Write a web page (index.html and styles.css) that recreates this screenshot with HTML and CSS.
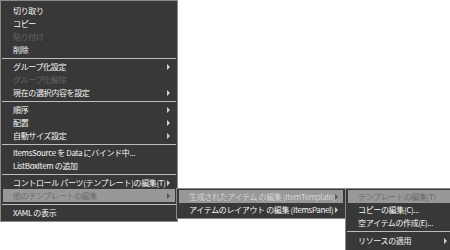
FILE: index.html
```html
<!DOCTYPE html>
<html lang="ja">
<head>
  <meta charset="UTF-8">
  <title>コンテキストメニュー</title>
  <link rel="stylesheet" href="styles.css">
</head>
<body>
  <div class="menu main-menu">
    <div class="item">切り取り</div>
    <div class="item">コピー</div>
    <div class="item disabled">貼り付け</div>
    <div class="item">削除</div>
    <div class="sep"></div>
    <div class="item sub">グループ化設定</div>
    <div class="item disabled">グループ化解除</div>
    <div class="item sub">現在の選択内容を設定</div>
    <div class="sep"></div>
    <div class="item sub">順序</div>
    <div class="item sub">配置</div>
    <div class="item sub">自動サイズ設定</div>
    <div class="sep"></div>
    <div class="item">ItemsSource を Data にバインド中...</div>
    <div class="item">ListBoxItem の追加</div>
    <div class="sep"></div>
    <div class="item sub">コントロール パーツ(テンプレート)の編集(T)</div>
    <div class="item sub active">他のテンプレートの編集</div>
    <div class="sep"></div>
    <div class="item">XAML の表示</div>
  </div>

  <div class="menu submenu-1">
    <div class="item sub active">生成されたアイテム の編集 (ItemTemplate)</div>
    <div class="item sub">アイテムのレイアウト の編集 (ItemsPanel)</div>
  </div>

  <div class="menu submenu-2">
    <div class="item active">テンプレートの編集(T)</div>
    <div class="item">コピーの編集(C)...</div>
    <div class="item">空アイテムの作成(E)...</div>
    <div class="sep"></div>
    <div class="item sub">リソースの適用</div>
  </div>
</body>
</html>
```

FILE: styles.css
```css
body {
  margin: 0;
  background: #fff;
  font-family: "Noto Sans CJK JP", "DejaVu Sans", sans-serif;
  font-size: 8px;
  letter-spacing: -0.35px;
  width: 450px;
  height: 250px;
  overflow: hidden;
  position: relative;
}
.menu {
  background: #383838;
  border: 1px solid #8a8a8a;
  padding: 3px 2px 2px;
  box-sizing: border-box;
  color: #f6f6f6;
}
.main-menu {
  width: 178px;
}
.item {
  height: 13px;
  line-height: 13px;
  padding-left: 10px;
  position: relative;
  white-space: nowrap;
}
.item.disabled {
  color: #666;
}
.item.active {
  background: #989898;
  color: #6c6c6c;
}
.item.sub::after {
  content: "";
  position: absolute;
  right: 5px;
  top: 4px;
  border-left: 3px solid #d0d0d0;
  border-top: 3px solid transparent;
  border-bottom: 3px solid transparent;
}
.item.active.sub::after {
  border-left-color: #555;
}
.sep {
  height: 1px;
  background: #bcbcbc;
  margin: 2px -1px 1px;
}
.submenu-1 {
  position: absolute;
  left: 176px;
  top: 188px;
  width: 170px;
  padding-top: 1px;
}
.submenu-1 .item.active {
  color: #d4d4d4;
}
.submenu-2 {
  position: absolute;
  left: 345px;
  top: 188px;
  width: 110px;
  height: 66px;
  padding-top: 1px;
}
.submenu-2 .sep {
  margin: 2px -1px 2px;
}
```
